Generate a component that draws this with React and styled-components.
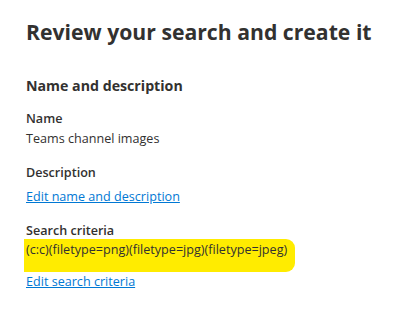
import React from 'react'
import styled, { createGlobalStyle } from 'styled-components'

const Global = createGlobalStyle`
  body {
    margin: 0;
    background: #ffffff;
    font-family: "Open Sans", "Noto Sans", sans-serif;
    color: #323130;
  }
`

const Page = styled.div`
  padding: 17px 0 0 26px;
  font-size: 12.6px;
  line-height: 18px;
`

const Title = styled.h1`
  margin: 0 0 29px;
  font-size: 21.2px;
  line-height: 30px;
  font-weight: 700;
  white-space: nowrap;
`

const SectionTitle = styled.h2`
  margin: 0 0 14px;
  font-size: 14.2px;
  line-height: 20px;
  font-weight: 700;
`

const Field = styled.div`
  margin-bottom: 16px;
`

const Label = styled.div`
  font-weight: 600;
  margin-bottom: 2px;
`

const Value = styled.div``

const Highlight = styled.div`
  width: fit-content;
  background: #ffec00;
  margin: -3px 0 0 -2px;
  padding: 2px 8px 13px 2px;
  border-radius: 0 9px 9px 0;
`

const LinkRow = styled.div`
  margin-top: ${({ $gap }) => $gap}px;
`

const EditLink = styled.a`
  color: #0078d4;
  text-decoration: underline;
  cursor: pointer;
`

export default function App() {
  return (
    <>
      <Global />
      <Page>
        <Title>Review your search and create it</Title>
        <SectionTitle>Name and description</SectionTitle>
        <Field>
          <Label>Name</Label>
          <Value>Teams channel images</Value>
        </Field>
        <Field>
          <Label>Description</Label>
          <LinkRow $gap={6}>
            <EditLink>Edit name and description</EditLink>
          </LinkRow>
        </Field>
        <Field>
          <Label>Search criteria</Label>
          <Highlight>(c:c)(filetype=png)(filetype=jpg)(filetype=jpeg)</Highlight>
          <LinkRow $gap={1}>
            <EditLink>Edit search criteria</EditLink>
          </LinkRow>
        </Field>
      </Page>
    </>
  )
}
